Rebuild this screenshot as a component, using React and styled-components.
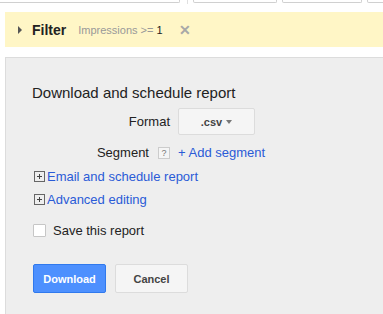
import React from "react";
import styled, { createGlobalStyle } from "styled-components";

const Global = createGlobalStyle`
  body {
    margin: 0;
    background: #fff;
    font-family: "Liberation Sans", Arial, sans-serif;
    color: #222;
  }
`;

const tabs = [
  { id: 1, width: 184, gap: 0 },
  { id: 2, width: 82, gap: 13 },
  { id: 3, width: 78, gap: 5 },
  { id: 4, width: 30, gap: 5 },
];

const App = () => {
  return (
    <>
      <Global />
      <Page>
        <TabStrip>
          {tabs.map(({ id, width, gap }) => (
            <Tab key={id} $w={width} $gap={gap} />
          ))}
          <Divider />
        </TabStrip>
        <FilterBar>
          <Caret />
          <FilterTitle>Filter</FilterTitle>
          <FilterValue>
            Impressions &gt;= <b>1</b>
          </FilterValue>
          <Close>✕</Close>
        </FilterBar>
        <Panel>
          <Title>Download and schedule report</Title>
          <Form>
            <Label>Format</Label>
            <Select>
              .csv <Arrow />
            </Select>
            <Label>
              Segment <Help>?</Help>
            </Label>
            <Link>+ Add segment</Link>
          </Form>
          <Expander>
            <PlusBox />
            <Link>Email and schedule report</Link>
          </Expander>
          <Expander>
            <PlusBox />
            <Link>Advanced editing</Link>
          </Expander>
          <CheckRow>
            <Box />
            Save this report
          </CheckRow>
          <Buttons>
            <Button $primary>Download</Button>
            <Button>Cancel</Button>
          </Buttons>
        </Panel>
      </Page>
    </>
  );
};

export default App;

const Page = styled.div`
  width: 383px;
  height: 314px;
  overflow: hidden;
`;

const TabStrip = styled.div`
  display: flex;
  position: relative;
  height: 3px;
  margin-left: -6px;
`;

const Tab = styled.div`
  flex: none;
  width: ${(p) => p.$w}px;
  margin-left: ${(p) => p.$gap}px;
  height: 2px;
  border: 1px solid #d0d0d0;
  border-top: 0;
  border-radius: 0 0 2px 2px;
  background: #fff;
`;

const Divider = styled.div`
  position: absolute;
  left: 193px;
  top: 0;
  width: 1px;
  height: 4px;
  background: #e0e0e0;
`;

const FilterBar = styled.div`
  margin: 9px 0 0 5px;
  height: 35px;
  background: #fff6c6;
  display: flex;
  align-items: center;
  padding-left: 13px;
`;

const Caret = styled.span`
  width: 0;
  height: 0;
  border-top: 4px solid transparent;
  border-bottom: 4px solid transparent;
  border-left: 4px solid #555;
  margin-right: 10px;
`;

const FilterTitle = styled.span`
  font-size: 14px;
  font-weight: bold;
  color: #222;
  margin-right: 12px;
`;

const FilterValue = styled.span`
  font-size: 11px;
  color: #999;
  b {
    font-weight: normal;
    color: #222;
  }
`;

const Close = styled.span`
  margin-left: 16px;
  font-size: 14px;
  font-weight: bold;
  color: #a8a8a8;
`;

const Panel = styled.div`
  margin: 10px 0 0 5px;
  height: 257px;
  background: #eeeeee;
  border-top: 1px solid #dcdcdc;
  border-left: 1px solid #dcdcdc;
  padding: 26px 0 0 26px;
  box-sizing: border-box;
`;

const Title = styled.div`
  font-size: 15px;
  color: #222;
  line-height: 18px;
`;

const Form = styled.div`
  display: grid;
  grid-template-columns: 138px auto;
  column-gap: 8px;
  row-gap: 10px;
  align-items: center;
  justify-items: start;
  margin-top: 6px;
  font-size: 13px;
`;

const Label = styled.div`
  justify-self: end;
  display: flex;
  align-items: center;
  color: #222;
`;

const Help = styled.span`
  display: inline-block;
  width: 10px;
  height: 10px;
  border: 1px solid #ccc;
  background: #f5f5f5;
  color: #777;
  font-size: 9px;
  line-height: 10px;
  text-align: center;
  margin-left: 9px;
`;

const Select = styled.div`
  width: 75px;
  height: 25px;
  border: 1px solid #dcdcdc;
  border-radius: 2px;
  background: #f5f5f5;
  display: flex;
  align-items: center;
  justify-content: center;
  font-size: 11px;
  font-weight: bold;
  color: #444;
  gap: 4px;
`;

const Arrow = styled.span`
  width: 0;
  height: 0;
  border-left: 3px solid transparent;
  border-right: 3px solid transparent;
  border-top: 4px solid #777;
`;

const Link = styled.span`
  color: #2a5bd7;
  font-size: 13px;
  cursor: pointer;
`;

const Expander = styled.div`
  display: flex;
  align-items: center;
  margin: 9px 0 0 2px;
  height: 14px;
`;

const PlusBox = styled.span`
  position: relative;
  width: 9px;
  height: 9px;
  border: 1px solid #666;
  margin-right: 2px;
  &::before,
  &::after {
    content: "";
    position: absolute;
    background: #444;
  }
  &::before {
    left: 2px;
    right: 2px;
    top: 4px;
    height: 1px;
  }
  &::after {
    top: 2px;
    bottom: 2px;
    left: 4px;
    width: 1px;
  }
`;

const CheckRow = styled.label`
  display: flex;
  align-items: center;
  margin: 17px 0 0 1px;
  font-size: 13px;
  color: #222;
`;

const Box = styled.span`
  width: 11px;
  height: 11px;
  border: 1px solid #c6c6c6;
  border-radius: 1px;
  background: #fff;
  margin-right: 7px;
`;

const Buttons = styled.div`
  display: flex;
  gap: 9px;
  margin: 26px 0 0 1px;
`;

const Button = styled.button`
  width: 73px;
  height: 29px;
  border-radius: 2px;
  font-family: "Liberation Sans", Arial, sans-serif;
  font-size: 11px;
  font-weight: bold;
  padding: 0;
  border: 1px solid ${(p) => (p.$primary ? "#3079ed" : "#dcdcdc")};
  background: ${(p) => (p.$primary ? "#4d90fe" : "#f5f5f5")};
  color: ${(p) => (p.$primary ? "#fff" : "#444")};
`;
